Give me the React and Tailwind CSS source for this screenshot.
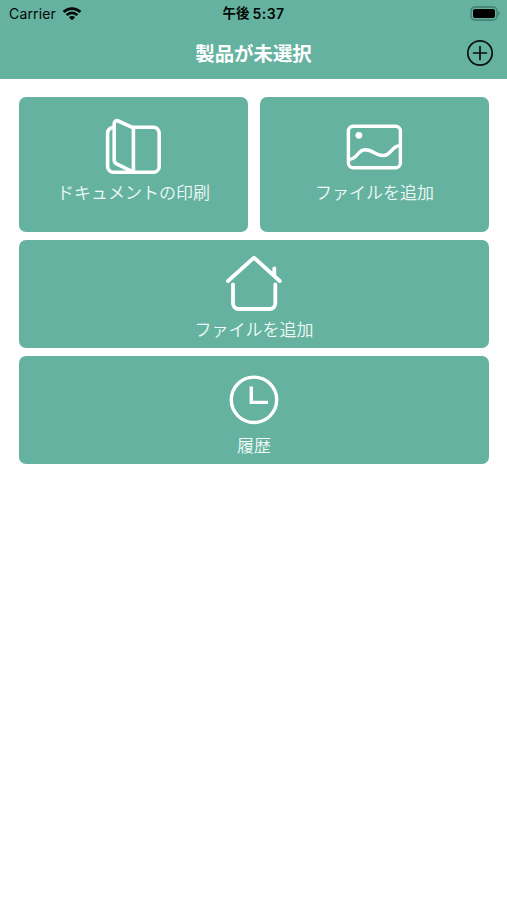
import React from 'react';

function WifiIcon() {
  return (
    <svg width="20" height="14" viewBox="0 0 20 14" fill="none" stroke="#020806" strokeWidth="2.7">
      <path d="M1.6 5a12 12 0 0 1 16.8 0" />
      <path d="M4.6 8.1a7.7 7.7 0 0 1 10.8 0" />
      <path d="M10 13.3 6.9 10.3a4.4 4.4 0 0 1 6.2 0z" fill="#020806" stroke="none" />
    </svg>
  );
}

function BatteryIcon() {
  return (
    <svg width="31" height="15" viewBox="0 0 31 15" fill="none">
      <rect x="1" y="1" width="26" height="13" rx="4" stroke="#3f7c6e" strokeWidth="1.3" />
      <rect x="3" y="3" width="22" height="9" rx="2" fill="#000" />
      <path d="M28.3 5.2c1.7.6 1.7 4 0 4.6z" fill="#3f7c6e" />
    </svg>
  );
}

function PlusIcon() {
  return (
    <svg width="28" height="28" viewBox="0 0 28 28" fill="none" stroke="#06120f" strokeWidth="1.7" strokeLinecap="round">
      <circle cx="14" cy="14" r="12.2" />
      <path d="M14 7.6v12.8M7.6 14h12.8" />
    </svg>
  );
}

function TileIcon({ children, strokeWidth = 3.4, viewBox = '0 0 60 60' }) {
  return (
    <svg
      width="60"
      height="60"
      viewBox={viewBox}
      fill="none"
      stroke="#fff"
      strokeWidth={strokeWidth}
      strokeLinecap="round"
      strokeLinejoin="round"
    >
      {children}
    </svg>
  );
}

function DocumentIcon() {
  return (
    <TileIcon strokeWidth={3.6} viewBox="0.6 0 60 60">
      <path d="M30 10.2h20a5.8 5.8 0 0 1 5.8 5.8v33.5a5.8 5.8 0 0 1-5.8 5.8H10a5.8 5.8 0 0 1-5.8-5.8V16.4c0-3 2-5.2 5-5.9" />
      <path d="M30 10.8v44.4L13.2 46.8c-1.6-.8-2.4-1.8-2.4-3.5V7c0-2.7 1.8-4 4-3z" />
    </TileIcon>
  );
}

function PictureIcon() {
  return (
    <TileIcon viewBox="0.6 0 60 60">
      <rect x="4" y="9.3" width="52" height="41.4" rx="4.8" />
      <circle cx="14.5" cy="18.3" r="3.4" fill="#fff" stroke="none" />
      <path d="M5 42.3c8.3 0 7.8-9.5 16-9.5 7.2 0 10.5 5.7 17.5 5.7 9 0 8-9.3 16.5-9.8" />
    </TileIcon>
  );
}

function HomeIcon() {
  return (
    <TileIcon strokeWidth={3.8}>
      <path d="M4 29 30 5.7 55.8 29M50.3 16.5v7" />
      <path d="M9 32.3v19.2a5.5 5.5 0 0 0 5.5 5.5h31.3a5.5 5.5 0 0 0 5.5-5.5V32.3" />
    </TileIcon>
  );
}

function ClockIcon() {
  return (
    <TileIcon>
      <circle cx="30" cy="29.8" r="22.7" />
      <path d="M27.3 16.5v15.9H44" strokeLinecap="butt" strokeLinejoin="miter" />
    </TileIcon>
  );
}

function Tile({ icon, label, className }) {
  return (
    <button type="button" className={`flex flex-col items-center rounded-[7px] bg-[#66b2a0] ${className}`}>
      {icon}
      <span className="text-[17px] leading-5 font-[350] text-[#effaf6]">{label}</span>
    </button>
  );
}

export default function App() {
  return (
    <div className="min-h-[900px] w-full bg-white font-['Inter','Noto_Sans_CJK_JP',sans-serif]">
      <header className="h-[79px] bg-[#66b2a0]">
        <div className="grid h-[27px] grid-cols-3 items-center pr-1.5 pl-[9px] text-[#020806]">
          <div className="flex items-center gap-1.5">
            <span className="text-[14px] leading-none tracking-[0.15px]">Carrier</span>
            <WifiIcon />
          </div>
          <div className="flex items-center justify-center gap-[3px] pr-[3px] text-[13.5px] leading-none font-semibold">
            <span className="pt-px font-bold">午後</span>
            <span className="text-[14px] tracking-[0.4px]">5:37</span>
          </div>
          <div className="flex justify-end">
            <BatteryIcon />
          </div>
        </div>
        <div className="grid h-[52px] grid-cols-[1fr_auto_1fr] items-center px-[13px]">
          <h1 className="col-start-2 pt-[3px] text-[19.4px] leading-none font-bold text-white">製品が未選択</h1>
          <button type="button" className="justify-self-end">
            <PlusIcon />
          </button>
        </div>
      </header>

      <main className="grid grid-cols-2 gap-x-3 gap-y-[8.6px] pt-[18.4px] pr-[18px] pl-[19px]">
        <Tile icon={<DocumentIcon />} label="ドキュメントの印刷" className="h-[134.2px] gap-1.5 pt-[19.6px]" />
        <Tile icon={<PictureIcon />} label="ファイルを追加" className="h-[134.2px] gap-1.5 pt-[19.6px]" />
        <Tile icon={<HomeIcon />} label="ファイルを追加" className="col-span-2 h-[107.5px] gap-2 pt-[11.8px]" />
        <Tile icon={<ClockIcon />} label="履歴" className="col-span-2 h-[107.5px] gap-1.5 pt-[13.7px]" />
      </main>
    </div>
  );
}
